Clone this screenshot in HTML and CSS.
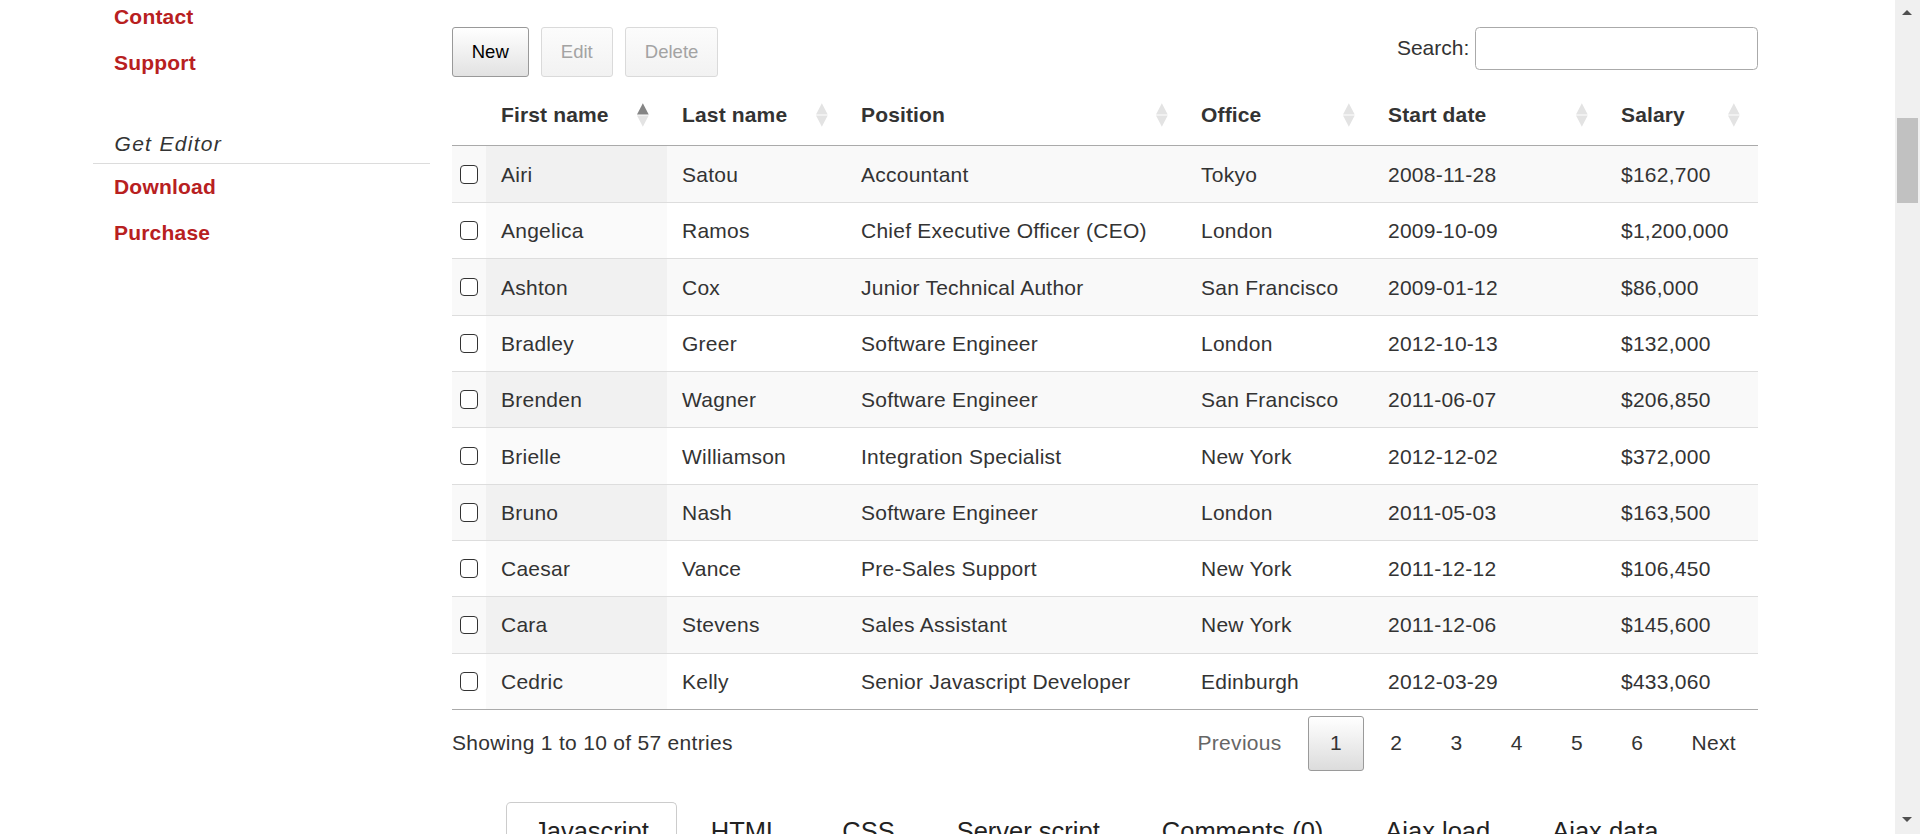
FILE: index.html
```html
<!DOCTYPE html>
<html lang="en">
<head>
<meta charset="utf-8">
<title>DataTables Editor example</title>
<link rel="stylesheet" href="styles.css">
</head>
<body>
<div class="page">
  <aside class="sidebar">
    <nav class="nav">
      <a href="#">Contact</a>
      <a href="#">Support</a>
    </nav>
    <div class="side-title">Get Editor</div>
    <nav class="nav">
      <a href="#">Download</a>
      <a href="#">Purchase</a>
    </nav>
  </aside>

  <main class="content">
    <div class="toolbar">
      <div class="buttons">
        <button class="btn">New</button>
        <button class="btn disabled">Edit</button>
        <button class="btn disabled">Delete</button>
      </div>
      <label class="search">Search:<input type="search" class="search-input"></label>
    </div>

    <table class="dt">
      <colgroup>
        <col class="c-cb"><col class="c-fn"><col class="c-ln"><col class="c-pos"><col class="c-off"><col class="c-sd"><col class="c-sal">
      </colgroup>
      <thead>
        <tr>
          <th class="th-cb"></th>
          <th>First name<svg class="sort asc" viewBox="0 0 12 24"><polygon class="up" points="6,0 12,11.5 0,11.5"/><polygon class="down" points="0,12.5 12,12.5 6,24"/></svg></th>
          <th>Last name<svg class="sort" viewBox="0 0 12 24"><polygon class="up" points="6,0 12,11.5 0,11.5"/><polygon class="down" points="0,12.5 12,12.5 6,24"/></svg></th>
          <th>Position<svg class="sort" viewBox="0 0 12 24"><polygon class="up" points="6,0 12,11.5 0,11.5"/><polygon class="down" points="0,12.5 12,12.5 6,24"/></svg></th>
          <th>Office<svg class="sort" viewBox="0 0 12 24"><polygon class="up" points="6,0 12,11.5 0,11.5"/><polygon class="down" points="0,12.5 12,12.5 6,24"/></svg></th>
          <th>Start date<svg class="sort" viewBox="0 0 12 24"><polygon class="up" points="6,0 12,11.5 0,11.5"/><polygon class="down" points="0,12.5 12,12.5 6,24"/></svg></th>
          <th>Salary<svg class="sort" viewBox="0 0 12 24"><polygon class="up" points="6,0 12,11.5 0,11.5"/><polygon class="down" points="0,12.5 12,12.5 6,24"/></svg></th>
        </tr>
      </thead>
      <tbody>
        <tr class="odd"><td class="cb"><input type="checkbox"></td><td class="sorted">Airi</td><td>Satou</td><td>Accountant</td><td>Tokyo</td><td>2008-11-28</td><td>$162,700</td></tr>
        <tr class="even"><td class="cb"><input type="checkbox"></td><td class="sorted">Angelica</td><td>Ramos</td><td>Chief Executive Officer (CEO)</td><td>London</td><td>2009-10-09</td><td>$1,200,000</td></tr>
        <tr class="odd"><td class="cb"><input type="checkbox"></td><td class="sorted">Ashton</td><td>Cox</td><td>Junior Technical Author</td><td>San Francisco</td><td>2009-01-12</td><td>$86,000</td></tr>
        <tr class="even"><td class="cb"><input type="checkbox"></td><td class="sorted">Bradley</td><td>Greer</td><td>Software Engineer</td><td>London</td><td>2012-10-13</td><td>$132,000</td></tr>
        <tr class="odd"><td class="cb"><input type="checkbox"></td><td class="sorted">Brenden</td><td>Wagner</td><td>Software Engineer</td><td>San Francisco</td><td>2011-06-07</td><td>$206,850</td></tr>
        <tr class="even"><td class="cb"><input type="checkbox"></td><td class="sorted">Brielle</td><td>Williamson</td><td>Integration Specialist</td><td>New York</td><td>2012-12-02</td><td>$372,000</td></tr>
        <tr class="odd"><td class="cb"><input type="checkbox"></td><td class="sorted">Bruno</td><td>Nash</td><td>Software Engineer</td><td>London</td><td>2011-05-03</td><td>$163,500</td></tr>
        <tr class="even"><td class="cb"><input type="checkbox"></td><td class="sorted">Caesar</td><td>Vance</td><td>Pre-Sales Support</td><td>New York</td><td>2011-12-12</td><td>$106,450</td></tr>
        <tr class="odd"><td class="cb"><input type="checkbox"></td><td class="sorted">Cara</td><td>Stevens</td><td>Sales Assistant</td><td>New York</td><td>2011-12-06</td><td>$145,600</td></tr>
        <tr class="even"><td class="cb"><input type="checkbox"></td><td class="sorted">Cedric</td><td>Kelly</td><td>Senior Javascript Developer</td><td>Edinburgh</td><td>2012-03-29</td><td>$433,060</td></tr>
      </tbody>
    </table>

    <div class="footer">
      <div class="info">Showing 1 to 10 of 57 entries</div>
      <div class="paginate">
        <a class="pg disabled">Previous</a>
        <a class="pg current">1</a>
        <a class="pg">2</a>
        <a class="pg">3</a>
        <a class="pg">4</a>
        <a class="pg">5</a>
        <a class="pg">6</a>
        <a class="pg">Next</a>
      </div>
    </div>

    <ul class="tabs">
      <li class="tab active">Javascript</li>
      <li class="tab">HTML</li>
      <li class="tab">CSS</li>
      <li class="tab">Server script</li>
      <li class="tab">Comments (0)</li>
      <li class="tab">Ajax load</li>
      <li class="tab">Ajax data</li>
    </ul>
  </main>
</div>

<div class="scrollbar">
  <span class="sb-arrow sb-up"></span>
  <span class="sb-thumb"></span>
  <span class="sb-arrow sb-down"></span>
</div>
</body>
</html>
```

FILE: styles.css
```css
* { box-sizing: border-box; }

html, body {
  margin: 0;
  padding: 0;
  height: 834px;
  overflow: hidden;
  background: #fff;
}

body {
  font-family: "Liberation Sans", Arial, sans-serif;
  color: #333;
}

.page {
  display: flex;
  align-items: flex-start;
  padding-left: 93px;
}

/* Sidebar */
.sidebar {
  width: 337px;
  flex: none;
  margin-top: -6.15px;
}

.nav a {
  display: block;
  padding-left: 21px;
  font-size: 21px;
  font-weight: 700;
  line-height: 45.75px;
  letter-spacing: 0.2px;
  color: #b8201f;
  text-decoration: none;
}

.side-title {
  margin-top: 43.35px;
  padding: 0 0 4.5px 21.5px;
  font-size: 21px;
  font-style: italic;
  line-height: 30px;
  letter-spacing: 1.3px;
  color: #333;
  border-bottom: 1.5px solid #dcdcdc;
}

/* Main content */
.content {
  width: 1306px;
  flex: none;
  margin-left: 22px;
  padding-top: 27.3px;
}

.toolbar {
  display: flex;
  justify-content: space-between;
  align-items: flex-start;
  height: 50px;
}

.buttons {
  display: flex;
  gap: 12.6px;
}

.btn {
  height: 50px;
  padding: 0 18.75px;
  border: 1.5px solid #999;
  border-radius: 3px;
  background: linear-gradient(to bottom, #ffffff 0%, #e2e2e2 100%);
  font-family: "Liberation Sans", Arial, sans-serif;
  font-size: 18.5px;
  color: #000;
  cursor: pointer;
}

.btn.disabled {
  border-color: #dadada;
  background: linear-gradient(to bottom, #fcfcfc 0%, #f2f2f2 100%);
  color: #a3a3a3;
  cursor: default;
}

.search {
  display: flex;
  align-items: center;
  font-size: 21px;
  color: #333;
}

.search-input {
  width: 283px;
  height: 42.4px;
  margin: 0 0 0 5.7px;
  border: 1.5px solid #aaa;
  border-radius: 4.5px;
  background: #fff;
  font-size: 21px;
  padding: 0 6px;
}

/* Table */
.dt {
  width: 1306px;
  margin-top: 10.7px;
  table-layout: fixed;
  border-collapse: separate;
  border-spacing: 0;
  border-bottom: 1.5px solid #aaa;
  font-size: 21px;
}

.c-cb { width: 34px; }
.c-fn { width: 181px; }
.c-ln { width: 179px; }
.c-pos { width: 340px; }
.c-off { width: 187px; }
.c-sd { width: 233px; }
.c-sal { width: 152px; }

.dt th {
  position: relative;
  text-align: left;
  font-weight: 700;
  font-size: 21px;
  line-height: 24px;
  letter-spacing: 0.15px;
  color: #333;
  padding: 15px 15px 18.5px 15px;
  border-bottom: 1.5px solid #aaa;
  white-space: nowrap;
}

.sort {
  position: absolute;
  right: 18px;
  top: 15.3px;
  width: 11.7px;
  height: 24px;
}

.sort polygon { fill: #e3e3e3; }
.sort.asc .up { fill: #858585; }

.dt td {
  height: 56.33px;
  padding: 1px 15px 0 15px;
  border-top: 1.5px solid #ddd;
  color: #333;
  letter-spacing: 0.25px;
  white-space: nowrap;
  vertical-align: middle;
}

.dt tbody tr:first-child td {
  height: 55.55px;
  border-top: 0;
}

.dt tr.odd td { background: #f9f9f9; }
.dt tr.odd td.sorted { background: #f1f1f1; }
.dt tr.even td { background: #fff; }
.dt tr.even td.sorted { background: #fafafa; }

.dt td.cb {
  padding: 0;
  text-align: center;
}

.dt td.cb input {
  appearance: none;
  -webkit-appearance: none;
  display: block;
  width: 18.5px;
  height: 18.5px;
  margin: 0 auto;
  border: 1.5px solid #333;
  border-radius: 4px;
  background: #fff;
}

/* Footer */
.footer {
  display: flex;
  justify-content: space-between;
  align-items: center;
  margin-top: 6px;
  height: 54.7px;
}

.info {
  font-size: 21px;
  letter-spacing: 0.3px;
  color: #333;
}

.paginate {
  display: flex;
}

.pg {
  display: block;
  height: 54.7px;
  line-height: 51.7px;
  padding: 0 21px;
  margin-left: 4.3px;
  border: 1.5px solid transparent;
  border-radius: 3px;
  font-size: 21px;
  letter-spacing: 0.3px;
  color: #333;
  text-decoration: none;
}

.pg.disabled { color: #666; }

.pg.current {
  border-color: #9a9a9a;
  background: linear-gradient(to bottom, #ffffff 0%, #dcdcdc 100%);
}

/* Tabs */
.tabs {
  display: flex;
  gap: 6px;
  list-style: none;
  margin: 31.6px 0 0 0;
  padding: 0 0 0 54px;
}

.tab {
  padding: 13px 27px 40px;
  line-height: 30px;
  font-size: 25.5px;
  color: #222;
  border: 1.5px solid transparent;
  border-bottom: 0;
  border-radius: 5px 5px 0 0;
  white-space: nowrap;
}

.tab.active { border-color: #ccc; }

/* Fake window scrollbar */
.scrollbar {
  position: fixed;
  top: 0;
  right: 0;
  width: 25px;
  height: 834px;
  background: #f0f0f0;
}

.sb-thumb {
  position: absolute;
  left: 2px;
  right: 2px;
  top: 117.5px;
  height: 85px;
  background: #c1c1c1;
}

.sb-arrow {
  position: absolute;
  left: 7px;
  width: 0;
  height: 0;
  border-left: 5.5px solid transparent;
  border-right: 5.5px solid transparent;
}

.sb-up {
  top: 10px;
  border-bottom: 5.5px solid #505050;
}

.sb-down {
  top: 817px;
  border-top: 5.5px solid #505050;
}
```
